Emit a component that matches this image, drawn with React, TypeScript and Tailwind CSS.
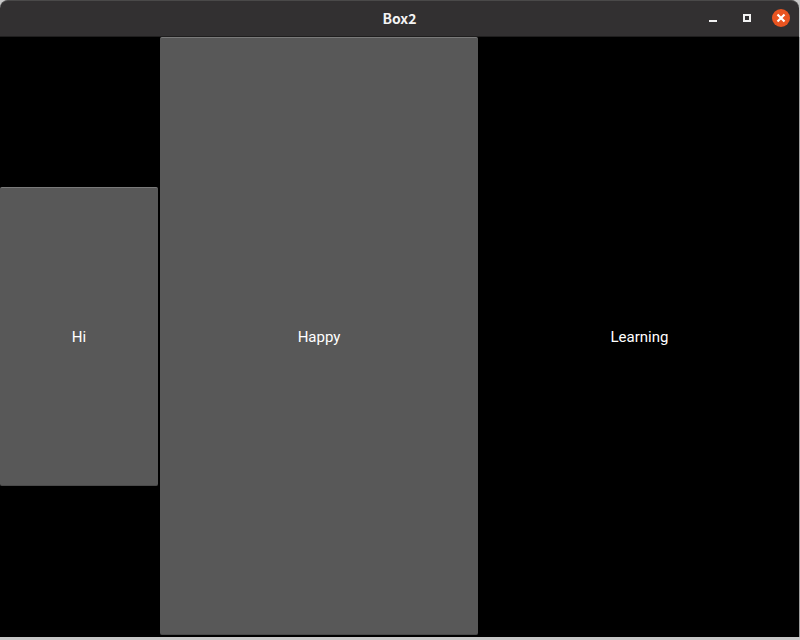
import React from "react";

function TitleBar({ title }: { title: string }) {
  return (
    <header className="mr-px grid h-[37px] shrink-0 grid-cols-[1fr_auto_1fr] items-center rounded-t-lg border-t border-b border-t-[#4a4949] border-b-[#1f1e1e] bg-[#323031] px-[9px] pb-[2px]">
      <span />
      <h1 className="font-['Noto_Sans_CJK_SC',sans-serif] text-[14px] leading-5 font-bold text-[#f4f4f4]">{title}</h1>
      <div className="flex items-center justify-end gap-4">
        <button type="button" aria-label="Minimize" className="flex size-[18px] items-center justify-center">
          <svg width="18" height="18" viewBox="0 0 18 18" shapeRendering="crispEdges">
            <rect x="5" y="11" width="8" height="2" fill="#f2f2f2" />
          </svg>
        </button>
        <button type="button" aria-label="Maximize" className="flex size-[18px] items-center justify-center">
          <svg width="18" height="18" viewBox="0 0 18 18" shapeRendering="crispEdges">
            <rect x="6" y="6" width="6" height="6" fill="none" stroke="#f2f2f2" strokeWidth="2" />
          </svg>
        </button>
        <button type="button" aria-label="Close" className="flex size-[18px] items-center justify-center rounded-full bg-[#e95420]">
          <svg width="18" height="18" viewBox="0 0 18 18">
            <path d="M5.5 5.5 L12.5 12.5 M12.5 5.5 L5.5 12.5" stroke="#ffffff" strokeWidth="2.2" />
          </svg>
        </button>
      </div>
    </header>
  );
}

function BoxButton({ label, size }: { label: string; size: string }) {
  return (
    <button
      type="button"
      className={`${size} rounded-[2px] border-t border-b border-t-[#7a7a7a] border-b-[#4a4a4a] bg-[#585858] pt-[2px] text-white`}
    >
      {label}
    </button>
  );
}

export default function App() {
  return (
    <div className="flex h-screen flex-col bg-[#c8c8c8] pb-[3px]">
      <TitleBar title="Box2" />
      <main className="grid min-h-0 flex-1 grid-cols-[1fr_2fr_2fr] bg-black font-[Roboto,sans-serif] text-[15px] leading-5 text-white">
        <div className="flex items-center pr-[2px] pb-[2px]">
          <BoxButton label="Hi" size="h-1/2 w-full" />
        </div>
        <div className="flex pr-[2px] pb-[2px]">
          <BoxButton label="Happy" size="h-full w-full" />
        </div>
        <div className="flex items-center justify-center border-r border-[#a0a0a0]">
          <p>Learning</p>
        </div>
      </main>
    </div>
  );
}
